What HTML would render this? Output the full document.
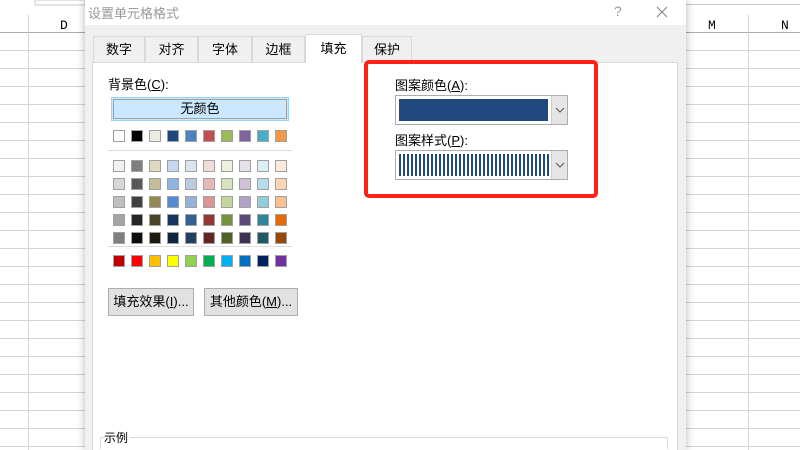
<!DOCTYPE html>
<html><head><meta charset="utf-8"><style>
*{margin:0;padding:0;box-sizing:border-box}
html,body{width:800px;height:450px;overflow:hidden}
body{background:#fff;position:relative;font-family:"Liberation Sans","Noto Sans CJK SC",sans-serif;font-size:12px;color:#000}
.a{position:absolute}
.sw{position:absolute;width:12px;height:12px;border:1px solid #a0a0a0}
.tab{position:absolute;top:36px;height:26px;border:1px solid #d9d9d9;border-bottom:none;background:#f0f0f0;text-align:center;line-height:26px;font-size:13px}
.btn{position:absolute;background:#e1e1e1;border:1px solid #adadad;text-align:center;line-height:26px;font-size:13px}
.dd{position:absolute;left:155px;top:0;width:16px;height:28px;background:#e5e5e5;border-left:1px solid #ccc}
</style></head><body>
<svg class="a" style="left:0;top:0" width="800" height="450">
<rect x="35" y="0" width="50" height="5" fill="#fff" stroke="#c8c8c8"/>
<line x1="0" y1="32.5" x2="800" y2="32.5" stroke="#ababab"/>
<g stroke="#d4d4d4">
<line x1="0" y1="50.5" x2="800" y2="50.5"/><line x1="0" y1="68.5" x2="800" y2="68.5"/><line x1="0" y1="86.5" x2="800" y2="86.5"/><line x1="0" y1="104.5" x2="800" y2="104.5"/><line x1="0" y1="122.5" x2="800" y2="122.5"/><line x1="0" y1="140.5" x2="800" y2="140.5"/><line x1="0" y1="158.5" x2="800" y2="158.5"/><line x1="0" y1="176.5" x2="800" y2="176.5"/><line x1="0" y1="194.5" x2="800" y2="194.5"/><line x1="0" y1="212.5" x2="800" y2="212.5"/><line x1="0" y1="230.5" x2="800" y2="230.5"/><line x1="0" y1="248.5" x2="800" y2="248.5"/><line x1="0" y1="266.5" x2="800" y2="266.5"/><line x1="0" y1="284.5" x2="800" y2="284.5"/><line x1="0" y1="302.5" x2="800" y2="302.5"/><line x1="0" y1="320.5" x2="800" y2="320.5"/><line x1="0" y1="338.5" x2="800" y2="338.5"/><line x1="0" y1="356.5" x2="800" y2="356.5"/><line x1="0" y1="374.5" x2="800" y2="374.5"/><line x1="0" y1="392.5" x2="800" y2="392.5"/><line x1="0" y1="410.5" x2="800" y2="410.5"/><line x1="0" y1="428.5" x2="800" y2="428.5"/><line x1="0" y1="446.5" x2="800" y2="446.5"/>
<line x1="28.5" y1="15" x2="28.5" y2="450"/><line x1="748.5" y1="15" x2="748.5" y2="450"/>
</g>
<line x1="680" y1="4.5" x2="800" y2="4.5" stroke="#c8c8c8"/>
<text x="60" y="29" font-family="Liberation Mono" font-size="13">D</text>
<text x="708" y="29" font-family="Liberation Mono" font-size="13">M</text>
<text x="781" y="29" font-family="Liberation Mono" font-size="13">N</text>
</svg>
<div class="a" style="left:85px;top:0;width:601px;height:450px;background:#f0f0f0;box-shadow:0 0 8px rgba(0,0,0,.3)"></div>
<div class="a" style="left:85px;top:0;width:601px;height:25px;background:#fff"></div>
<div class="a" style="left:88px;top:3px;color:#999;font-size:13px">设置单元格格式</div>
<div class="a" style="left:614px;top:3px;color:#999;font-size:14px">?</div>
<svg class="a" style="left:656px;top:6px" width="12" height="12"><path d="M1 1L11 11M11 1L1 11" stroke="#888" stroke-width="1.2"/></svg>
<div class="a" style="left:92px;top:62px;width:586px;height:388px;background:#fff;border:1px solid #d9d9d9;border-bottom:none"></div>
<div class="tab" style="left:93px;width:52px">数字</div>
<div class="tab" style="left:145px;width:53px">对齐</div>
<div class="tab" style="left:198px;width:54px">字体</div>
<div class="tab" style="left:252px;width:53px">边框</div>
<div class="tab" style="left:305px;top:34px;width:57px;height:29px;background:#fff;line-height:28px">填充</div>
<div class="tab" style="left:362px;width:50px">保护</div>
<div class="a" style="left:108px;top:74px;font-size:13px">背景色(<u>C</u>):</div>
<div class="a" style="left:111px;top:97px;width:178px;height:24px;background:#cce8ff;border:1px solid #99d1ff"><div style="margin:1px;height:20px;border:1px solid #a0a0a0;text-align:center;line-height:18px;font-size:13px">无颜色</div></div>
<div class="a" style="left:108px;top:150px;width:184px;height:1px;background:#ddd"></div>
<div class="a" style="left:108px;top:246px;width:184px;height:1px;background:#ddd"></div>
<div id="sw"></div>
<div class="btn" style="left:108px;top:288px;width:86px;height:28px">填充效果(<u>I</u>)...</div>
<div class="btn" style="left:204px;top:288px;width:94px;height:28px">其他颜色(<u>M</u>)...</div>
<div class="a" style="left:364px;top:60px;width:234px;height:138px;border:4px solid #ff2018;border-radius:5px"></div>
<div class="a" style="left:395px;top:75px;font-size:13px">图案颜色(<u>A</u>):</div>
<div class="a" style="left:395px;top:95px;width:173px;height:30px;border:1px solid #adadad;background:#fff"><div class="a" style="left:3px;top:3px;width:149px;height:22px;background:#204a7e"></div><div class="dd"><svg class="a" style="left:3px;top:11px" width="10" height="6"><path d="M1 1L5 5L9 1" fill="none" stroke="#555"/></svg></div></div>
<div class="a" style="left:395px;top:130px;font-size:13px">图案样式(<u>P</u>):</div>
<div class="a" style="left:395px;top:150px;width:173px;height:30px;border:1px solid #adadad;background:#fff"><div class="a" style="left:3px;top:3px;width:150px;height:22px;background:repeating-linear-gradient(90deg,#204a7e 0 2px,#fff 2px 4px)"></div><div class="dd"><svg class="a" style="left:3px;top:11px" width="10" height="6"><path d="M1 1L5 5L9 1" fill="none" stroke="#555"/></svg></div></div>
<div class="a" style="left:100px;top:437px;width:568px;height:12px;border:1px solid #d9d9d9;border-bottom:none"></div>
<div class="a" style="left:104px;top:429px;background:#fff;font-size:12px;padding-right:2px">示例</div>
<script>
var rows=[[130,["#fff","#000","#eeece1","#1f497d","#4f81bd","#c0504d","#9bbb59","#8064a2","#4bacc6","#f79646"]],
[160,["#f2f2f2","#7f7f7f","#ddd9c3","#c6d9f0","#dbe5f1","#f2dcdb","#ebf1dd","#e5e0ec","#dbeef3","#fdeada"]],
[178,["#d8d8d8","#595959","#c4bd97","#8db3e2","#b8cce4","#e5b9b7","#d7e3bc","#ccc1d9","#b7dde8","#fbd5b5"]],
[196,["#bfbfbf","#3f3f3f","#938953","#548dd4","#95b3d7","#d99694","#c3d69b","#b2a2c7","#92cddc","#fac08f"]],
[214,["#a5a5a5","#262626","#494429","#17365d","#366092","#953734","#76923c","#5f497a","#31859b","#e36c09"]],
[232,["#7f7f7f","#0c0c0c","#1d1b10","#0f243e","#244061","#632423","#4f6128","#3f3151","#205867","#974806"]],
[255,["#c00000","#ff0000","#ffc000","#ffff00","#92d050","#00b050","#00b0f0","#0070c0","#002060","#7030a0"]]];
var h="";rows.forEach(function(r){r[1].forEach(function(c,i){h+='<div class="sw" style="left:'+(113+i*18)+'px;top:'+r[0]+'px;background:'+c+'"></div>';});});
document.getElementById("sw").innerHTML=h;
</script>
</body></html>
